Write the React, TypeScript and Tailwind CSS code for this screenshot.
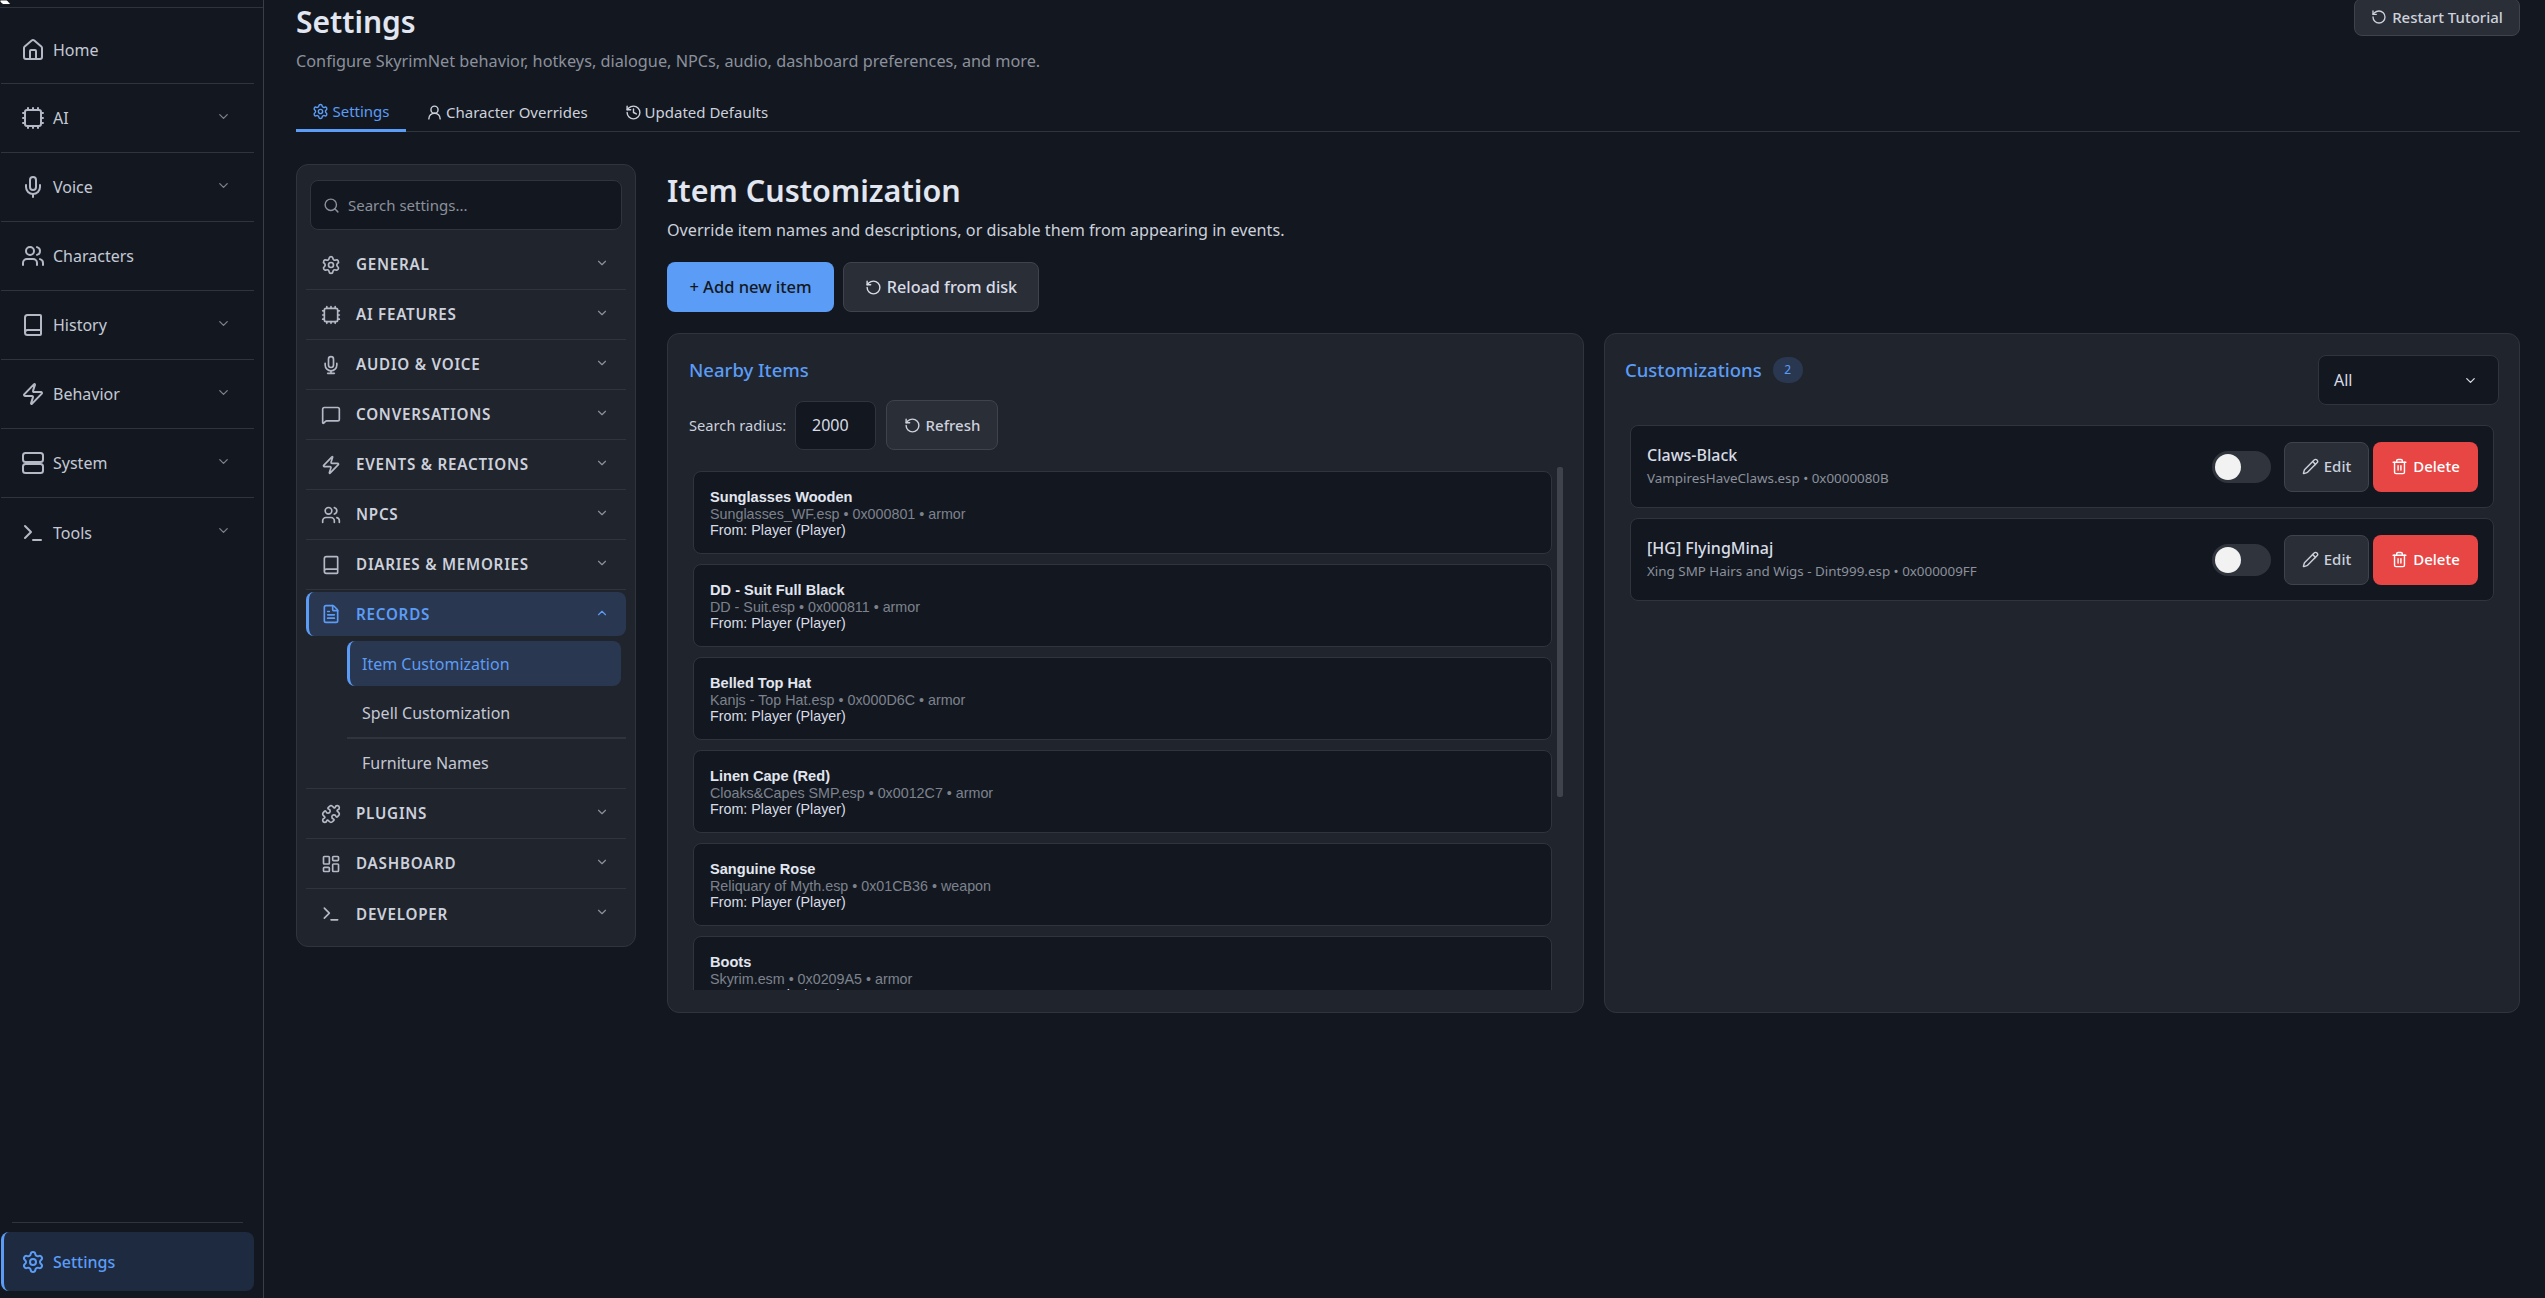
import React from "react";
import {
  House, Users, Book, Zap, Terminal, ChevronDown, ChevronUp, Settings, Search, FileText, Puzzle,
  LayoutDashboard, MessageSquare, RotateCcw, Pencil, Trash2, UserRound, History,
} from "lucide-react";

const MicStem = ({ base, className }: { base?: boolean; className?: string }) => (
  <svg viewBox="0 0 24 24" fill="none" stroke="currentColor" strokeWidth="2" strokeLinecap="round" strokeLinejoin="round" className={className}>
    <path d="M12 2a3 3 0 0 0-3 3v7a3 3 0 0 0 6 0V5a3 3 0 0 0-3-3Z" />
    <path d="M19 10v2a7 7 0 0 1-14 0v-2" />
    <line x1="12" x2="12" y1="19" y2="22" />
    {base && <line x1="8" x2="16" y1="22" y2="22" />}
  </svg>
);

const Stack = ({ className }: { className?: string }) => (
  <svg viewBox="0 0 24 24" fill="none" stroke="currentColor" strokeWidth="2" strokeLinecap="round" strokeLinejoin="round" className={className}>
    <rect x="2" y="2" width="20" height="9" rx="2.5" />
    <rect x="2" y="13" width="20" height="9" rx="2.5" />
  </svg>
);

const Chip = ({ className }: { className?: string }) => (
  <svg viewBox="0 0 24 24" fill="none" stroke="currentColor" strokeWidth="2" strokeLinecap="round" strokeLinejoin="round" className={className}>
    <rect x="4" y="4" width="16" height="16" rx="2" />
    <path d="M12 20v2M12 2v2M17 20v2M17 2v2M2 12h2M2 17h2M2 7h2M20 12h2M20 17h2M20 7h2M7 20v2M7 2v2" />
  </svg>
);

const nav: { label: string; Icon: React.ComponentType<{ className?: string }>; chev: boolean }[] = [
  { label: "AI", Icon: Chip, chev: true },
  { label: "Voice", Icon: MicStem, chev: true },
  { label: "Characters", Icon: Users, chev: false },
  { label: "History", Icon: Book, chev: true },
  { label: "Behavior", Icon: Zap, chev: true },
  { label: "System", Icon: Stack, chev: true },
  { label: "Tools", Icon: Terminal, chev: true },
];

const groupsTop: { label: string; Icon: React.ComponentType<{ className?: string }> }[] = [
  { label: "GENERAL", Icon: Settings },
  { label: "AI FEATURES", Icon: Chip },
  { label: "AUDIO & VOICE", Icon: ({ className }) => <MicStem base className={className} /> },
  { label: "CONVERSATIONS", Icon: MessageSquare },
  { label: "EVENTS & REACTIONS", Icon: Zap },
  { label: "NPCS", Icon: Users },
  { label: "DIARIES & MEMORIES", Icon: Book },
];
const groupsBottom: typeof groupsTop = [
  { label: "PLUGINS", Icon: Puzzle },
  { label: "DASHBOARD", Icon: LayoutDashboard },
  { label: "DEVELOPER", Icon: Terminal },
];

const items = [
  ["Sunglasses Wooden", "Sunglasses_WF.esp • 0x000801 • armor", "From: Player (Player)"],
  ["DD - Suit Full Black", "DD - Suit.esp • 0x000811 • armor", "From: Player (Player)"],
  ["Belled Top Hat", "Kanjs - Top Hat.esp • 0x000D6C • armor", "From: Player (Player)"],
  ["Linen Cape (Red)", "Cloaks&Capes SMP.esp • 0x0012C7 • armor", "From: Player (Player)"],
  ["Sanguine Rose", "Reliquary of Myth.esp • 0x01CB36 • weapon", "From: Player (Player)"],
  ["Boots", "Skyrim.esm • 0x0209A5 • armor", "From: Tarquin (NPC)"],
];

const customs = [
  ["Claws-Black", "VampiresHaveClaws.esp • 0x0000080B"],
  ["[HG] FlyingMinaj", "Xing SMP Hairs and Wigs - Dint999.esp • 0x000009FF"],
];

function GroupRow({ label, Icon }: { label: string; Icon: React.ComponentType<{ className?: string }> }) {
  return (
    <div className="h-[50px] flex items-center pl-[15px] pr-[17px] border-b border-[#30343d] last:border-b-0 text-[#ccd1dc]">
      <Icon className="w-[20px] h-[20px] shrink-0 text-[#b4b9c5]" />
      <span className="ml-[15px] text-[15.2px] font-semibold tracking-[0.05em] flex-1">{label}</span>
      <ChevronDown className="w-[14px] h-[14px] text-[#8b909c] -mt-[4px]" />
    </div>
  );
}

export default function App() {
  return (
    <div className="relative w-[2545px] h-[1298px] overflow-hidden flex bg-[#131820] text-[#d8dce6] font-['Noto_Sans',sans-serif]">
      <svg viewBox="0 0 12 5" className="absolute left-0 top-0 w-[12px] h-[5px]">
        <path d="M0 0h7l4 4.5H3L0 2z" fill="#fff" stroke="#000" strokeWidth="0.8" />
      </svg>

      <aside className="w-[264px] shrink-0 h-full border-r border-[#3a3e47] flex flex-col">
        <div className="h-[8px] border-b border-[#2f333c]" />
        <div className="flex flex-col pl-[1px] pr-[9px]">
          <div className="h-[76px] flex items-center pl-[20px] pt-[9px] border-b border-[#30343d] text-[#c4c9d5]">
            <House className="w-[24px] h-[24px] shrink-0 text-[#b4b9c5]" />
            <span className="ml-[8px] text-[16px]">Home</span>
          </div>
          {nav.map(({ label, Icon, chev }) => (
            <div key={label} className="h-[69px] flex items-center pl-[20px] pr-[23px] border-b border-[#30343d] last:border-b-0 text-[#c4c9d5]">
              <Icon className="w-[24px] h-[24px] shrink-0 text-[#b4b9c5]" />
              <span className="ml-[8px] text-[16px] flex-1">{label}</span>
              {chev && <ChevronDown className="w-[15px] h-[15px] text-[#7d828e] -mt-[4px]" />}
            </div>
          ))}
        </div>
        <div className="mt-auto mx-[12px] mb-[9px] w-[231px] border-t border-[#30343d]" />
        <div className="mb-[7px] ml-[1px] w-[253px] h-[59px] rounded-[8px] bg-[#1e2a40] border-l-[3px] border-[#5b9cf6] flex items-center pl-[17px] text-[#5b9cf6]">
          <Settings className="w-[24px] h-[24px] shrink-0" />
          <span className="ml-[8px] text-[16px] font-medium">Settings</span>
        </div>
      </aside>

      <main className="flex-1 min-w-0 pl-[32px] pr-[25px] flex flex-col">
        <div className="relative h-[132px] border-b border-[#30343d]">
          <div className="absolute right-0 -top-[2px] h-[38px] w-[166px] rounded-[8px] bg-[#2a2e37] border border-[#3f434c] flex items-center justify-center gap-[5px] text-[15px] font-medium text-[#ccd1dc]">
            <RotateCcw className="w-[16px] h-[16px]" />
            Restart Tutorial
          </div>
          <h1 className="text-[30px] leading-[44px] font-semibold text-[#e2e6f0]">Settings</h1>
          <p className="text-[16.25px] leading-[24px] mt-[5px] text-[#8b909c]">
            Configure SkyrimNet behavior, hotkeys, dialogue, NPCs, audio, dashboard preferences, and more.
          </p>
          <div className="absolute left-0 bottom-[-1px] flex h-[36px] text-[15px] text-[#ccd1dc]">
            <div className="w-[110px] border-b-[3px] border-[#5b9cf6] flex items-center justify-center gap-[3px] text-[#5b9cf6] pb-[3px]">
              <Settings className="w-[17px] h-[17px]" />
              Settings
            </div>
            <div className="ml-[20px] flex items-center gap-[3px] pb-[4px]">
              <UserRound className="w-[17px] h-[17px]" />
              Character Overrides
            </div>
            <div className="ml-[37px] flex items-center gap-[3px] pb-[4px]">
              <History className="w-[17px] h-[17px]" />
              Updated Defaults
            </div>
          </div>
        </div>

        <div className="mt-[32px] flex gap-[31px] items-start">
          <div className="w-[340px] shrink-0 h-[783px] rounded-[12px] bg-[#20242d] border border-[#30343d] px-[9px] pt-[15px]">
            <div className="mx-[4px] h-[50px] rounded-[8px] bg-[#131820] border border-[#30343d] flex items-center pl-[12px] text-[#8b909c] text-[15px]">
              <Search className="w-[17px] h-[17px]" />
              <span className="ml-[8px]">Search settings...</span>
            </div>
            <div className="mt-[10px]">
              {groupsTop.map((g) => (
                <GroupRow key={g.label} {...g} />
              ))}
              <div className="mt-[2px] h-[44px] rounded-[8px] bg-[#2a3750] border-l-[3px] border-[#5b9cf6] flex items-center pl-[12px] pr-[17px] text-[#5b9cf6]">
                <FileText className="w-[20px] h-[20px]" />
                <span className="ml-[15px] text-[15.2px] font-semibold tracking-[0.05em] flex-1">RECORDS</span>
                <ChevronUp className="w-[14px] h-[14px] -mt-[2px]" />
              </div>
              <div className="ml-[41px] mt-[5px]">
                <div className="mr-[5px] h-[45px] rounded-[8px] bg-[#2a3750] border-l-[3px] border-[#5b9cf6] flex items-center pl-[12px] text-[16px] text-[#5b9cf6]">
                  Item Customization
                </div>
                <div className="h-[53px] border-b-2 border-[#30343d] flex items-center pl-[15px] text-[16px] text-[#c4c9d5] pt-[2px]">
                  Spell Customization
                </div>
                <div className="h-[49px] pb-[1px] flex items-center pl-[15px] text-[16px] text-[#c4c9d5]">Furniture Names</div>
              </div>
              <div className="border-t border-[#30343d]">
                {groupsBottom.map((g) => (
                  <GroupRow key={g.label} {...g} />
                ))}
              </div>
            </div>
          </div>

          <div className="flex-1 min-w-0">
            <h2 className="text-[30.5px] leading-[44px] mt-[4px] font-semibold text-[#e2e6f0]">Item Customization</h2>
            <p className="text-[16.17px] leading-[24px] mt-[6px] text-[#ccd1dc]">
              Override item names and descriptions, or disable them from appearing in events.
            </p>
            <div className="flex gap-[9px] mt-[20px]">
              <div className="w-[167px] h-[50px] rounded-[8px] bg-[#5b9cf6] flex items-center justify-center text-[16.5px] font-medium text-[#131820]">
                + Add new item
              </div>
              <div className="w-[196px] h-[50px] rounded-[8px] bg-[#2a2e37] border border-[#3f434c] flex items-center justify-center gap-[5px] text-[16.2px] font-medium text-[#d8dce6]">
                <RotateCcw className="w-[17px] h-[17px]" />
                Reload from disk
              </div>
            </div>

            <div className="flex gap-[20px] mt-[21px] h-[680px]">
              <section className="flex-1 min-w-0 rounded-[12px] bg-[#20242d] border border-[#30343d] pl-[21px] pr-[20px] pt-[22px]">
                <h3 className="text-[18.5px] leading-[28px] font-medium text-[#5b9cf6]">Nearby Items</h3>
                <div className="flex items-center mt-[16px]">
                  <span className="text-[14.7px] text-[#ccd1dc] w-[106px]">Search radius:</span>
                  <div className="w-[81px] h-[49px] rounded-[8px] bg-[#131820] border border-[#30343d] flex items-center pl-[16px] text-[16px] text-[#d8dce6]">
                    2000
                  </div>
                  <div className="ml-[10px] w-[112px] h-[50px] rounded-[8px] bg-[#2a2e37] border border-[#3f434c] flex items-center justify-center gap-[5px] text-[15px] font-medium text-[#ccd1dc]">
                    <RotateCcw className="w-[17px] h-[17px]" />
                    Refresh
                  </div>
                </div>
                <div className="relative mt-[17px] h-[523px] overflow-hidden pl-[4px] pt-[4px] font-['Liberation_Sans',sans-serif]">
                  <div className="absolute right-0 top-0 w-[6px] h-[330px] rounded-[2px] bg-[#3f434c]" />
                  {items.map(([a, b, c]) => (
                    <div key={a} className="w-[859px] h-[83px] mb-[10px] rounded-[8px] bg-[#131820] border border-[#30343d] px-[16px] pt-[17px] text-[14.3px] leading-[16.5px]">
                      <div className="text-[14.6px] font-bold text-[#e2e6f0]">{a}</div>
                      <div className="text-[#7d828e]">{b}</div>
                      <div className="text-[#d8dce6]">{c}</div>
                    </div>
                  ))}
                </div>
              </section>

              <section className="flex-1 min-w-0 rounded-[12px] bg-[#20242d] border border-[#30343d] pl-[20px] pr-[20px] pt-[21px]">
                <div className="flex items-start">
                  <h3 className="text-[18.5px] leading-[28px] font-medium text-[#5b9cf6] mt-[1px]">Customizations</h3>
                  <span className="ml-[11px] mt-[2px] w-[30px] h-[26px] rounded-full bg-[#2a3750] text-[12px] text-[#5b9cf6] flex items-center justify-center">2</span>
                  <div className="ml-auto w-[181px] h-[50px] rounded-[8px] bg-[#131820] border border-[#30343d] flex items-center pl-[15px] pr-[20px] justify-between text-[16px] text-[#d8dce6]">
                    All
                    <ChevronDown className="w-[15px] h-[15px]" />
                  </div>
                </div>
                <div className="mt-[20px] ml-[5px] mr-[5px] flex flex-col gap-[10px]">
                  {customs.map(([a, b]) => (
                    <div key={a} className="h-[83px] rounded-[8px] bg-[#131820] border border-[#30343d] flex items-center pl-[16px] pr-[15px]">
                      <div className="flex-1 min-w-0 -mt-[3px]">
                        <div className="text-[16px] leading-[24px] font-medium text-[#d8dce6]">{a}</div>
                        <div className="text-[13.4px] leading-[20px] mt-[1px] text-[#8b909c]">{b}</div>
                      </div>
                      <div className="w-[59px] h-[32px] rounded-full bg-[#30343d] flex items-center pl-[3px]">
                        <div className="w-[26px] h-[26px] rounded-full bg-[#f2f2f2]" />
                      </div>
                      <div className="ml-[13px] w-[85px] h-[50px] rounded-[8px] bg-[#2a2e37] border border-[#3f434c] flex items-center justify-center gap-[5px] text-[15px] font-medium text-[#ccd1dc]">
                        <Pencil className="w-[17px] h-[17px]" />
                        Edit
                      </div>
                      <div className="ml-[4px] w-[105px] h-[50px] rounded-[8px] bg-[#e84545] flex items-center justify-center gap-[5px] text-[15px] font-medium text-white">
                        <Trash2 className="w-[17px] h-[17px]" />
                        Delete
                      </div>
                    </div>
                  ))}
                </div>
              </section>
            </div>
          </div>
        </div>
      </main>
    </div>
  );
}
